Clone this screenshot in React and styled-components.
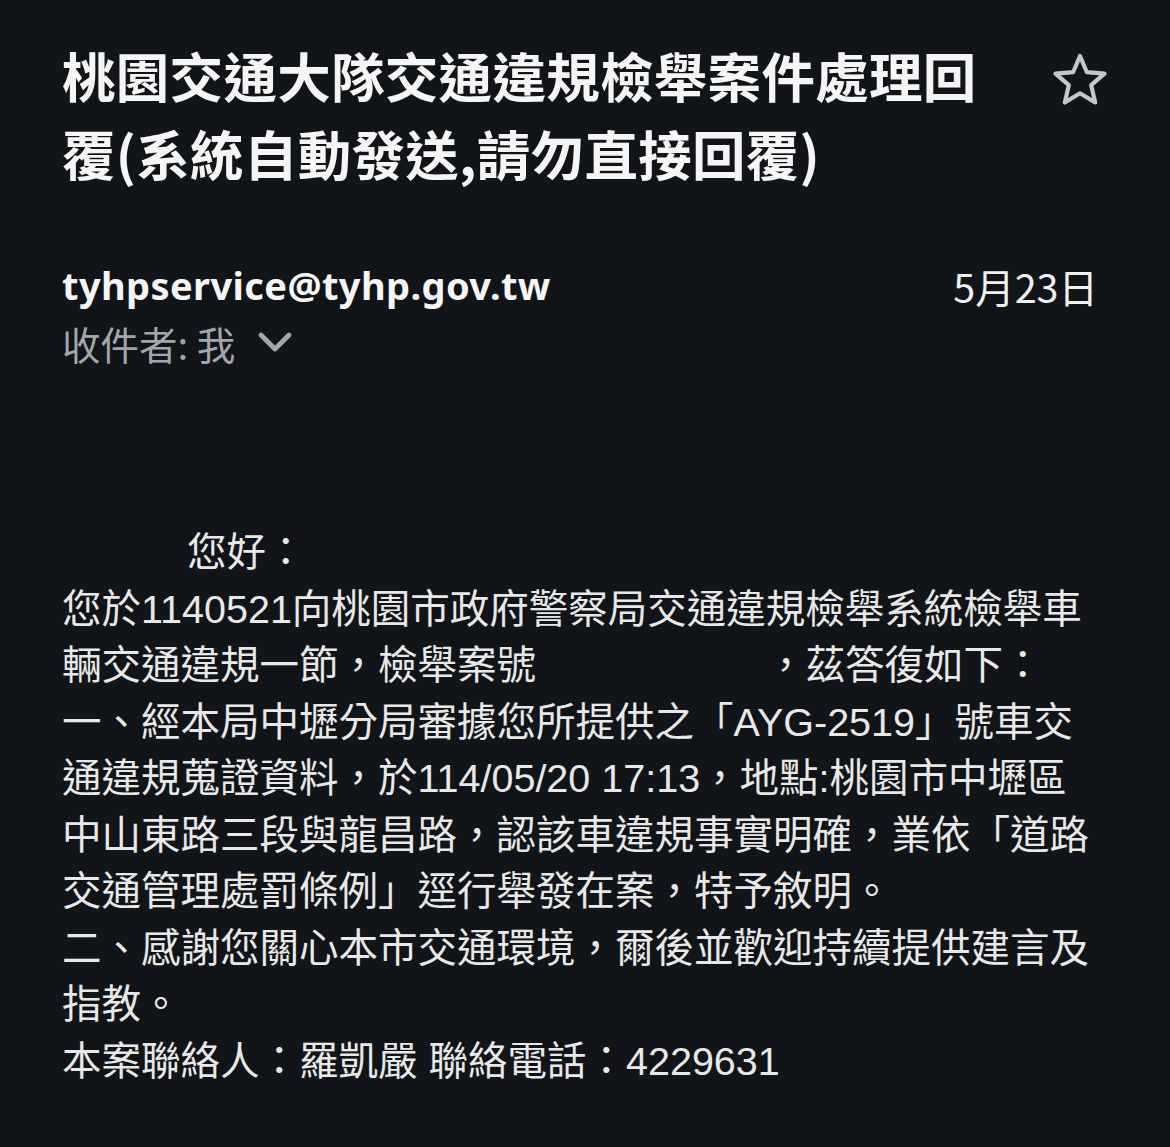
import React from 'react';
import styled, { createGlobalStyle } from 'styled-components';

const bodyLines = [
  ['您於1140521向桃園市政府警察局交通違規檢舉系統檢舉車'],
  ['輛交通違規一節，檢舉案號', { redact: 230 }, '，茲答復如下：'],
  ['一、經本局中壢分局審據您所提供之「AYG-2519」號車交'],
  ['通違規蒐證資料，於114/05/20 17:13，地點:桃園市中壢區'],
  ['中山東路三段與龍昌路，認該車違規事實明確，業依「道路'],
  ['交通管理處罰條例」逕行舉發在案，特予敘明。'],
  ['二、感謝您關心本市交通環境，爾後並歡迎持續提供建言及'],
  ['指教。'],
  ['本案聯絡人：羅凱嚴 聯絡電話：4229631'],
];

const StarIcon = () => (
  <svg width="60" height="60" viewBox="0 0 60 60" fill="none">
    <path
      d="M30 5 L36.9 21.2 L54.5 22.7 L41.2 34.2 L45.2 51.5 L30 42.3 L14.8 51.5 L18.8 34.2 L5.5 22.7 L23.1 21.2 Z"
      stroke="#c3c6cc"
      strokeWidth="4.2"
      strokeLinejoin="round"
    />
  </svg>
);

const Chevron = () => (
  <svg width="36" height="36" viewBox="0 0 36 36" fill="none">
    <polyline
      points="4,12 18,26 32,12"
      stroke="#a3a7ad"
      strokeWidth="4.8"
      strokeLinecap="round"
      strokeLinejoin="round"
    />
  </svg>
);

export default function App() {
  return (
    <>
      <GlobalStyle />
      <Page>
        <Header>
          <Title>桃園交通大隊交通違規檢舉案件處理回覆(系統自動發送,請勿直接回覆)</Title>
          <StarButton>
            <StarIcon />
          </StarButton>
        </Header>

        <Meta>
          <SenderRow>
            <Sender>tyhpservice@tyhp.gov.tw</Sender>
            <DateText>5月23日</DateText>
          </SenderRow>
          <Recipient>
            收件者: 我
            <ChevronWrap>
              <Chevron />
            </ChevronWrap>
          </Recipient>
        </Meta>

        <Body>
          <Line>
            <Redacted $w={125} />
            您好：
          </Line>
          {bodyLines.map((parts, i) => (
            <Line key={i}>
              {parts.map((p, j) =>
                typeof p === 'string' ? p : <Redacted key={j} $w={p.redact} />
              )}
            </Line>
          ))}
        </Body>
      </Page>
    </>
  );
}

const GlobalStyle = createGlobalStyle`
  html, body, #root {
    margin: 0;
    padding: 0;
    background: #111418;
  }

  body {
    min-height: 100vh;
    font-family: "Noto Sans CJK TC", "Noto Sans", sans-serif;
    color: #f2f2f2;
  }
`;

const Page = styled.div`
  min-height: 1147px;
  box-sizing: border-box;
  padding: 36px 72px 0 62px;
`;

const Header = styled.header`
  display: flex;
  justify-content: space-between;
  align-items: flex-start;
`;

const Title = styled.h1`
  margin: 0;
  width: 940px;
  font-family: "Noto Sans CJK TC", sans-serif;
  font-weight: 700;
  font-size: 53.5px;
  letter-spacing: 0.3px;
  line-height: 78px;
  color: #f5f5f5;
`;

const StarButton = styled.div`
  margin-top: 15px;
  margin-right: -12px;
  width: 60px;
  height: 60px;
`;

const Meta = styled.div`
  margin-top: 66px;
`;

const SenderRow = styled.div`
  display: flex;
  justify-content: space-between;
  align-items: center;
  height: 54px;
`;

const Sender = styled.div`
  font-family: "Noto Sans", "Noto Sans CJK TC", sans-serif;
  font-weight: 700;
  font-size: 38px;
  letter-spacing: 0.4px;
  color: #f5f5f5;
`;

const DateText = styled.div`
  font-family: "Noto Sans CJK TC", sans-serif;
  font-size: 39.5px;
  color: #f0f0f0;
`;

const Recipient = styled.div`
  display: flex;
  align-items: center;
  height: 62px;
  font-family: "Noto Sans CJK TC", sans-serif;
  font-size: 38.5px;
  color: #a3a7ad;
`;

const ChevronWrap = styled.span`
  display: inline-flex;
  margin-left: 22px;
  margin-top: -4px;
`;

const Body = styled.div`
  margin-top: 150px;
  font-family: "Liberation Sans", "Noto Sans CJK TC", sans-serif;
  font-size: 39.5px;
  line-height: 56.5px;
  color: #e8e8e8;
`;

const Line = styled.div`
  white-space: nowrap;
`;

const Redacted = styled.span`
  display: inline-block;
  width: ${p => p.$w}px;
`;
